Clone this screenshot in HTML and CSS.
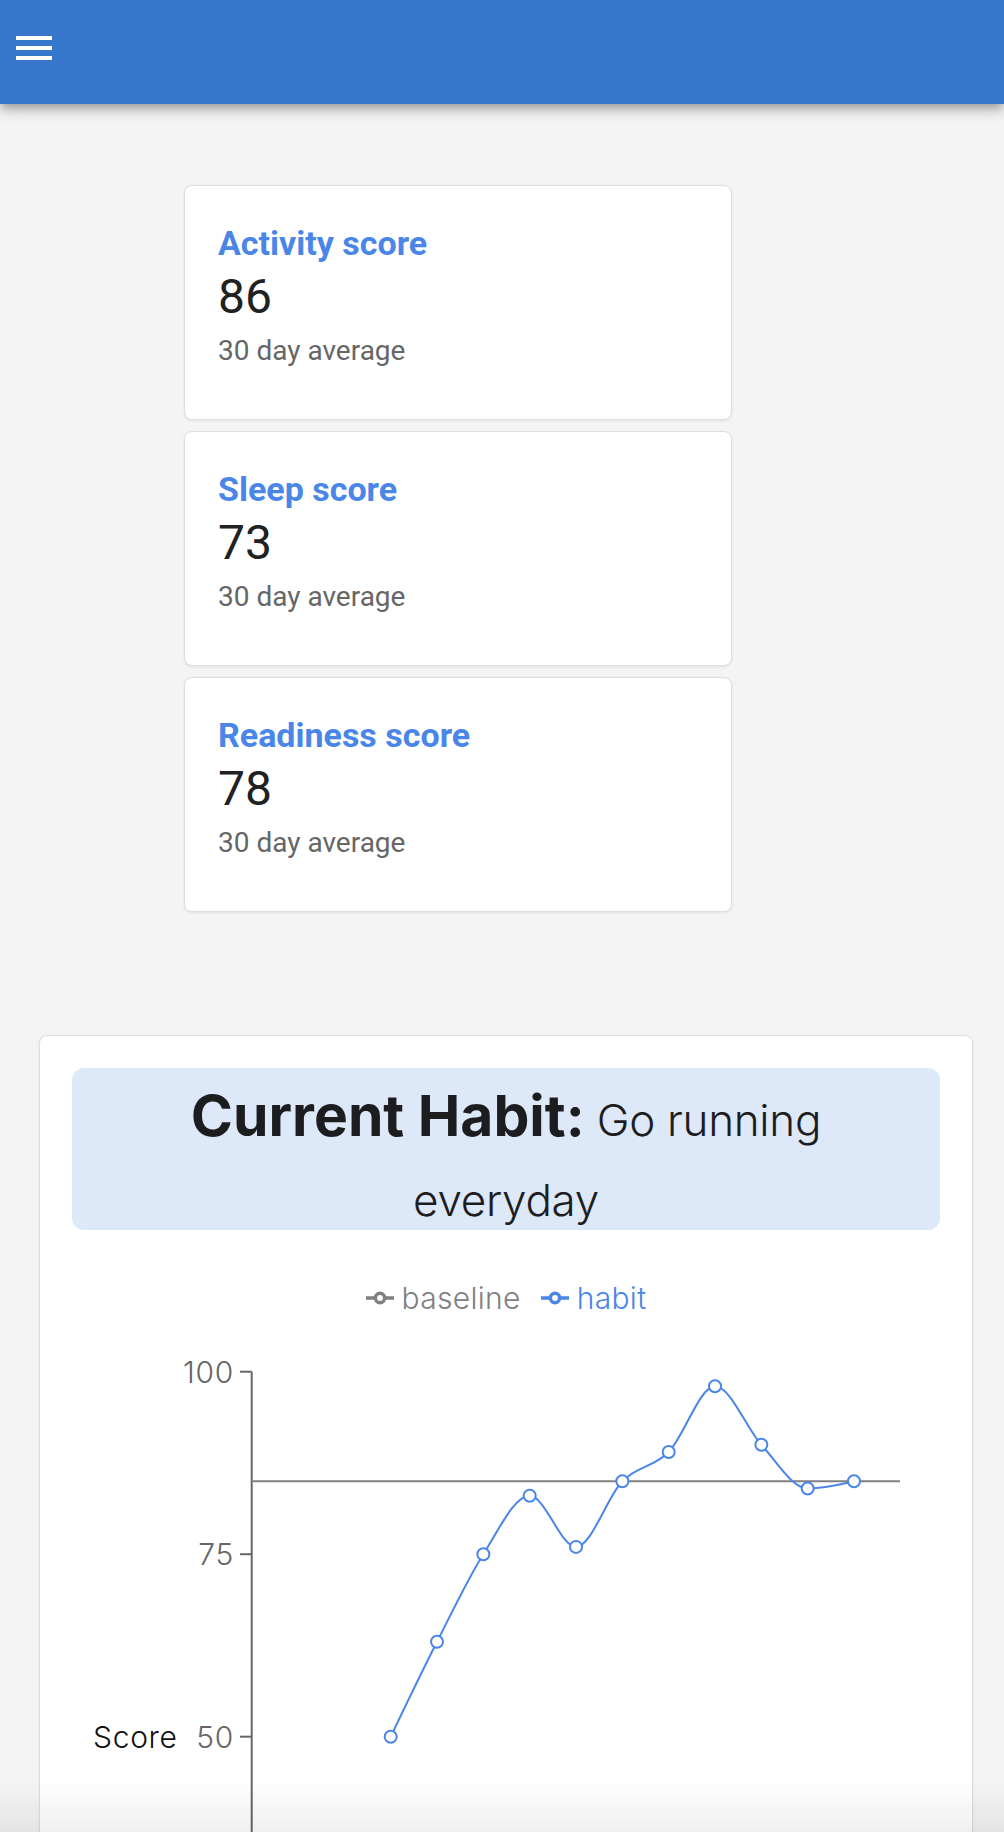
FILE: index.html
```html
<!DOCTYPE html>
<html lang="en">
<head>
<meta charset="utf-8">
<title>Dashboard</title>
<link rel="stylesheet" href="styles.css">
</head>
<body>
<header class="topbar">
  <button class="menu-btn" aria-label="Menu">
    <span class="bar"></span><span class="bar"></span><span class="bar"></span>
  </button>
</header>

<main class="content">
  <section class="scores">
    <div class="score-card">
      <div class="score-title">Activity score</div>
      <div class="score-value">86</div>
      <div class="score-sub">30 day average</div>
    </div>
    <div class="score-card">
      <div class="score-title">Sleep score</div>
      <div class="score-value">73</div>
      <div class="score-sub">30 day average</div>
    </div>
    <div class="score-card">
      <div class="score-title">Readiness score</div>
      <div class="score-value">78</div>
      <div class="score-sub">30 day average</div>
    </div>
  </section>

  <section class="habit-card">
    <div class="habit-banner">
      <h2 class="habit-heading"><span class="habit-label">Current Habit:</span> Go running everyday</h2>
    </div>

    <div class="legend">
      <div class="legend-item legend-baseline">
        <svg class="legend-icon" viewBox="0 0 32 32"><path fill="none" stroke="#808080" stroke-width="4" d="M0,16h10.667A5.333,5.333,0,1,1,21.333,16H32M21.333,16A5.333,5.333,0,1,1,10.667,16"/></svg>
        <span>baseline</span>
      </div>
      <div class="legend-item legend-habit">
        <svg class="legend-icon" viewBox="0 0 32 32"><path fill="none" stroke="#4a86e8" stroke-width="4" d="M0,16h10.667A5.333,5.333,0,1,1,21.333,16H32M21.333,16A5.333,5.333,0,1,1,10.667,16"/></svg>
        <span>habit</span>
      </div>
    </div>

    <svg class="chart" width="868" height="560" viewBox="0 0 868 560">
      <!-- y axis -->
      <line x1="179.7" y1="41.7" x2="179.7" y2="560" stroke="#666" stroke-width="2"/>
      <line x1="168" y1="41.7" x2="179.7" y2="41.7" stroke="#666" stroke-width="2"/>
      <line x1="168" y1="224.2" x2="179.7" y2="224.2" stroke="#666" stroke-width="2"/>
      <line x1="168" y1="406.7" x2="179.7" y2="406.7" stroke="#666" stroke-width="2"/>
      <text class="tick" x="162" y="52.7">100</text>
      <text class="tick" x="162" y="235.2">75</text>
      <text class="tick" x="162" y="417.7">50</text>
      <text class="axis-label" x="21" y="417.7">Score</text>

      <!-- baseline reference -->
      <line x1="180.7" y1="151.2" x2="828" y2="151.2" stroke="#808080" stroke-width="2"/>

      <!-- habit series -->
      <path fill="none" stroke="#4a86e8" stroke-width="2" d="M318.7,406.7C334.14,374.46,349.59,342.22,365.03,311.8C380.47,281.38,395.92,248.53,411.36,224.2C426.8,199.87,442.25,165.8,457.69,165.8C473.13,165.8,488.58,216.9,504.02,216.9C519.46,216.9,534.91,167.02,550.35,151.2C565.79,135.38,581.24,137.82,596.68,122C612.12,106.18,627.57,56.3,643.01,56.3C658.45,56.3,673.9,97.67,689.34,114.7C704.78,131.73,720.23,158.5,735.67,158.5C751.11,158.5,766.56,154.85,782,151.2"/>
      <g fill="#fff" stroke="#4a86e8" stroke-width="2">
        <circle cx="318.7" cy="406.7" r="6"/>
        <circle cx="365.03" cy="311.8" r="6"/>
        <circle cx="411.36" cy="224.2" r="6"/>
        <circle cx="457.69" cy="165.8" r="6"/>
        <circle cx="504.02" cy="216.9" r="6"/>
        <circle cx="550.35" cy="151.2" r="6"/>
        <circle cx="596.68" cy="122" r="6"/>
        <circle cx="643.01" cy="56.3" r="6"/>
        <circle cx="689.34" cy="114.7" r="6"/>
        <circle cx="735.67" cy="158.5" r="6"/>
        <circle cx="782" cy="151.2" r="6"/>
      </g>
    </svg>
  </section>
</main>

<div class="bottom-fade"></div>
</body>
</html>
```

FILE: styles.css
```css
* { box-sizing: border-box; }

html, body {
  margin: 0;
  padding: 0;
}

body {
  background: #f4f4f4;
  font-family: Roboto, "Liberation Sans", Arial, sans-serif;
  color: #212121;
}

.topbar {
  height: 104px;
  background: #3677cb;
  padding: 36px 0 0 16px;
  box-shadow: 0 4px 8px -2px rgba(0,0,0,.2), 0 8px 10px 0 rgba(0,0,0,.14), 0 2px 20px 0 rgba(0,0,0,.12);
  position: relative;
  z-index: 2;
}

.menu-btn {
  display: flex;
  flex-direction: column;
  gap: 6px;
  padding: 0;
  margin: 0;
  border: 0;
  background: none;
}

.menu-btn .bar {
  display: block;
  width: 36px;
  height: 4px;
  background: #fff;
}

.content {
  padding-top: 81px;
}

.scores {
  margin-left: 184px;
  width: 548px;
  display: flex;
  flex-direction: column;
  gap: 11px;
}

.score-card {
  height: 235px;
  background: #fff;
  border: 1px solid #dedede;
  border-radius: 8px;
  padding: 37px 33px 0;
  box-shadow: 0 1px 3px rgba(0,0,0,.08);
}

.score-title {
  font-size: 34px;
  line-height: 40px;
  font-weight: 700;
  color: #4a86e8;
}

.score-value {
  margin-top: 6px;
  font-size: 48px;
  line-height: 56px;
  font-weight: 400;
  color: #212121;
}

.score-sub {
  margin-top: 9px;
  font-size: 28px;
  line-height: 34px;
  color: #666;
}

.habit-card {
  margin-top: 123px;
  margin-left: 39px;
  width: 934px;
  background: #fff;
  border: 1px solid #dedede;
  border-radius: 8px;
  padding: 32px 32px 32px;
  box-shadow: 0 1px 3px rgba(0,0,0,.08);
}

.habit-banner {
  height: 162px;
  background: #dde8f9;
  border-radius: 12px;
  padding: 12px 80px 0;
  text-align: center;
}

.habit-heading {
  margin: 0;
  font-family: Inter, "Liberation Sans", sans-serif;
  font-size: 44px;
  line-height: 80px;
  font-weight: 300;
  color: #1d1d1f;
  letter-spacing: -0.3px;
}

.habit-label {
  font-size: 57px;
  line-height: 1;
  font-weight: 700;
  letter-spacing: 0;
}

.legend {
  margin-top: 51px;
  height: 34px;
  display: flex;
  justify-content: center;
  align-items: center;
  gap: 20px;
  font-family: Inter, "Liberation Sans", sans-serif;
  font-size: 30px;
  font-weight: 300;
  line-height: 34px;
  letter-spacing: 0.3px;
}

.legend-item {
  display: flex;
  align-items: center;
}

.legend-icon {
  width: 28px;
  height: 28px;
  margin-right: 8px;
}

.legend-baseline { color: #808080; }
.legend-habit { color: #4a86e8; }

.chart {
  display: block;
  margin-top: 15px;
}

.chart text {
  font-family: Inter, "Liberation Sans", sans-serif;
  font-size: 30px;
  font-weight: 300;
  letter-spacing: 0.7px;
}

.chart .tick {
  fill: #666;
  text-anchor: end;
}

.chart .axis-label {
  fill: #111;
}

.bottom-fade {
  position: fixed;
  left: 0;
  right: 0;
  bottom: 0;
  height: 52px;
  background: linear-gradient(to bottom, rgba(0,0,0,0), rgba(0,0,0,.06));
  pointer-events: none;
}
```
